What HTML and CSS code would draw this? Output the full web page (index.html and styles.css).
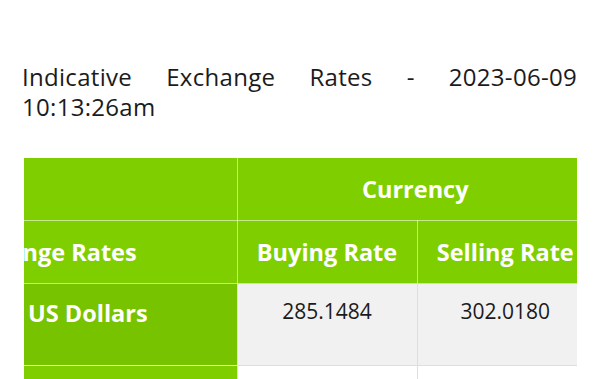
FILE: index.html
```html
<!DOCTYPE html>
<html>
<head>
<meta charset="utf-8">
<link rel="stylesheet" href="styles.css">
</head>
<body>
<main class="page">
  <h1 class="title">Indicative Exchange Rates - 2023-06-09 10:13:26am</h1>
  <div class="table-wrap">
    <table class="rates">
      <colgroup>
        <col class="c-name">
        <col class="c-buy">
        <col class="c-sell">
      </colgroup>
      <thead>
        <tr class="row-top">
          <th class="col-name"></th>
          <th class="group" colspan="2">Currency</th>
        </tr>
        <tr class="row-sub">
          <th class="col-name"><span class="clip">Exchange Rates</span></th>
          <th class="col-buy">Buying Rate</th>
          <th class="col-sell">Selling Rate</th>
        </tr>
      </thead>
      <tbody>
        <tr class="row-body">
          <td class="name">US Dollars</td>
          <td class="num">285.1484</td>
          <td class="num">302.0180</td>
        </tr>
        <tr class="row-next">
          <td class="name"></td>
          <td class="num"></td>
          <td class="num"></td>
        </tr>
      </tbody>
    </table>
  </div>
</main>
</body>
</html>
```

FILE: styles.css
```css
html, body {
  margin: 0;
  padding: 0;
  background: #ffffff;
}

.page {
  padding: 62px 23px 0 22px;
  font-family: "Open Sans", "Noto Sans", sans-serif;
  color: #1b1b1b;
}

.title {
  margin: 0;
  font-size: 24px;
  font-weight: 400;
  line-height: 30px;
  text-align: justify;
  letter-spacing: 0.3px;
}

.table-wrap {
  margin: 36px 0 0 2px;
  overflow: hidden;
  width: 553px;
}

.rates {
  border-collapse: collapse;
  table-layout: fixed;
  width: 569px;
}

.c-name { width: 213px; }
.c-buy { width: 180px; }
.c-sell { width: 176px; }

.rates th {
  background: #7fcf00;
  color: #ffffff;
  font-weight: 700;
  font-size: 23.5px;
  padding: 0;
  border: 1px solid rgba(255, 255, 255, 0.55);
  white-space: nowrap;
  overflow: visible;
}

.rates tr:first-child th {
  border-top: none;
}

.rates .col-name {
  border-left: none;
  text-align: left;
}

.rates .col-sell {
  border-right: none;
}

.rates .group {
  border-right: none;
}

.row-top th {
  height: 62px;
}

.row-sub th {
  height: 62px;
}

.clip {
  display: inline-block;
  margin-left: -70px;
}

.rates td {
  border: 1px solid #dedede;
  padding: 0;
  vertical-align: top;
}

.row-body td {
  height: 82px;
  background: #f1f1f1;
  padding-top: 13px;
  box-sizing: border-box;
}

.rates td.name {
  background: #78c300;
  color: #ffffff;
  font-weight: 700;
  font-size: 23.5px;
  padding-left: 4px;
  border-left: none;
  border-top: 1px solid rgba(255, 255, 255, 0.55);
  border-bottom: 1px solid rgba(255, 255, 255, 0.8);
}

.rates td.num {
  text-align: center;
  font-size: 21px;
  color: #1b1b1b;
}

.rates td.num:last-child {
  border-right: none;
}

.row-body td.num {
  border-top: 1px solid rgba(255, 255, 255, 0.55);
}

.row-next td {
  height: 20px;
  background: #ffffff;
}

.row-next td.name {
  background: #7fcf00;
}
```
